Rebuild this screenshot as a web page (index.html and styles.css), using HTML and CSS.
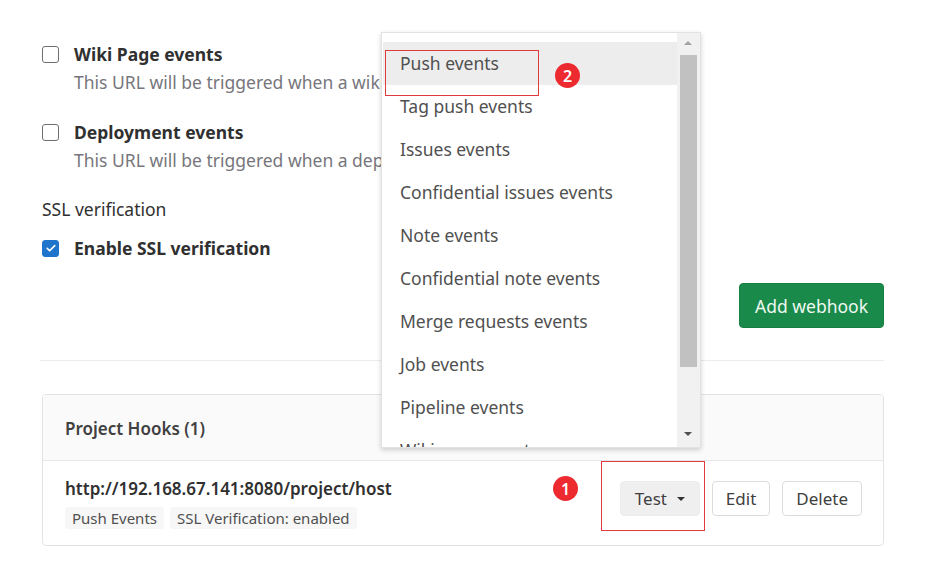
FILE: index.html
```html
<!DOCTYPE html>
<html>
<head>
<meta charset="utf-8">
<link rel="stylesheet" href="styles.css">
</head>
<body>
<div class="page">
  <div class="event">
    <div class="check-row">
      <span class="cb"></span>
      <span class="label">Wiki Page events</span>
    </div>
    <div class="desc">This URL will be triggered when a wiki page is created/updated</div>
  </div>
  <div class="event second">
    <div class="check-row">
      <span class="cb"></span>
      <span class="label">Deployment events</span>
    </div>
    <div class="desc">This URL will be triggered when a deployment starts, finishes, fails, or is canceled</div>
  </div>
  <div class="section-title">SSL verification</div>
  <div class="check-row ssl">
    <span class="cb checked">
      <svg viewBox="0 0 16 16" width="12" height="12"><path d="M3 8.5l3.2 3.2L13 4.8" fill="none" stroke="#fff" stroke-width="2.2" stroke-linecap="round" stroke-linejoin="round"/></svg>
    </span>
    <span class="label">Enable SSL verification</span>
  </div>
  <div class="actions">
    <button class="btn-green">Add webhook</button>
  </div>
  <div class="sep"></div>
  <div class="card">
    <div class="card-head">Project Hooks (1)</div>
    <div class="card-row">
      <div class="hook-info">
        <div class="hook-url">http://192.168.67.141:8080/project/host</div>
        <div class="badges">
          <span class="badge">Push Events</span>
          <span class="badge">SSL Verification: enabled</span>
        </div>
      </div>
      <div class="hook-btns">
        <button class="btn btn-test">Test <span class="caret"></span></button>
        <button class="btn">Edit</button>
        <button class="btn">Delete</button>
      </div>
    </div>
  </div>

  <div class="dropdown">
    <div class="dd-list">
      <div class="dd-item active">Push events</div>
      <div class="dd-item">Tag push events</div>
      <div class="dd-item">Issues events</div>
      <div class="dd-item">Confidential issues events</div>
      <div class="dd-item">Note events</div>
      <div class="dd-item">Confidential note events</div>
      <div class="dd-item">Merge requests events</div>
      <div class="dd-item">Job events</div>
      <div class="dd-item">Pipeline events</div>
      <div class="dd-item">Wiki page events</div>
    </div>
    <div class="dd-scroll">
      <span class="arrow-up"></span>
      <span class="thumb"></span>
      <span class="arrow-down"></span>
    </div>
  </div>

  <div class="mark mark-push"></div>
  <div class="mark mark-test"></div>
  <div class="num num-2">2</div>
  <div class="num num-1">1</div>
</div>
</body>
</html>
```
FILE: styles.css
```css
* { box-sizing: border-box; }
html, body { margin: 0; background: #fff; }
body {
  font-family: "Noto Sans", "Open Sans", sans-serif;
  font-size: 17.5px;
  color: #303030;
  width: 934px;
  height: 568px;
  overflow: hidden;
}
.page {
  position: relative;
  width: 934px;
  padding: 43px 50px 0 42px;
}
.check-row {
  display: flex;
  align-items: center;
  gap: 15px;
  height: 22px;
}
.cb {
  width: 17px;
  height: 17px;
  border: 1.5px solid #6e6e6e;
  border-radius: 3px;
  flex: none;
  display: flex;
  align-items: center;
  justify-content: center;
}
.cb.checked {
  background: #1f75cb;
  border-color: #1f75cb;
}
.label {
  font-weight: 700;
  font-size: 17.5px;
  line-height: 22px;
  color: #303030;
}
.desc {
  margin-top: 5px;
  padding-left: 32px;
  width: 620px;
  line-height: 24px;
  color: #77767c;
  white-space: nowrap;
  overflow: hidden;
}
.event.second { margin-top: 27px; }
.section-title {
  margin-top: 26px;
  line-height: 22px;
  color: #303030;
}
.check-row.ssl { margin-top: 17px; }
.actions {
  display: flex;
  justify-content: flex-end;
  margin-top: 24px;
}
.btn-green {
  font-family: inherit;
  font-size: 17.5px;
  height: 45px;
  width: 145px;
  background: #1a8a4b;
  color: #eef8f1;
  border: 1px solid #168043;
  border-radius: 4px;
  padding: 0;
}
.sep {
  margin-top: 32px;
  height: 1px;
  background: #ececec;
  margin-left: -2px;
}
.card {
  margin-top: 33px;
  border: 1px solid #e3e3e3;
  border-radius: 4px;
  overflow: hidden;
}
.card-head {
  height: 66px;
  background: #fafafa;
  border-bottom: 1px solid #e6e6e6;
  display: flex;
  align-items: center;
  padding-left: 22px;
  font-size: 17px;
  font-weight: 600;
  color: #404040;
  padding-top: 2px;
}
.card-row {
  display: flex;
  align-items: flex-start;
  justify-content: space-between;
  padding: 17px 21px 16px 22px;
}
.hook-url {
  font-weight: 600;
  font-size: 17px;
  line-height: 22px;
  color: #303030;
}
.badges {
  display: flex;
  gap: 6px;
  margin-top: 7px;
  margin-left: 0;
}
.badge {
  font-size: 15px;
  line-height: 22px;
  padding: 0 7px;
  background: #f7f7f8;
  color: #505050;
  border-radius: 3px;
}
.hook-btns {
  display: flex;
  gap: 12px;
  margin-top: 3px;
}
.btn {
  font-family: inherit;
  font-size: 17px;
  height: 35px;
  padding: 0 13px;
  background: #fff;
  border: 1px solid #dcdcdc;
  border-radius: 4px;
  color: #404040;
}
.btn-test {
  background: #efefef;
  border-color: #ececec;
  width: 80px;
  display: flex;
  align-items: center;
  justify-content: center;
  gap: 10px;
}
.caret {
  width: 0; height: 0;
  border-left: 4px solid transparent;
  border-right: 4px solid transparent;
  border-top: 4px solid #333;
}
.dropdown {
  position: absolute;
  left: 381px;
  top: 32px;
  width: 320px;
  height: 416px;
  background: #fff;
  border: 1px solid #e2e2e2;
  box-shadow: 0 2px 5px rgba(0,0,0,0.18);
  display: flex;
  overflow: hidden;
}
.dd-list {
  flex: 1;
  padding: 9px 0 0 1px;
}
.dd-item {
  height: 43px;
  line-height: 43px;
  padding-left: 17px;
  color: #505050;
  font-size: 17.5px;
  white-space: nowrap;
}
.dd-item.active { background: #ededed; }
.dd-scroll {
  width: 23px;
  background: #f1f1f1;
  position: relative;
}
.thumb {
  position: absolute;
  left: 3px;
  top: 22px;
  width: 17px;
  height: 312px;
  background: #c1c1c1;
}
.arrow-up, .arrow-down {
  position: absolute;
  left: 7px;
  width: 0; height: 0;
  border-left: 4px solid transparent;
  border-right: 4px solid transparent;
}
.arrow-up { top: 8px; border-bottom: 4px solid #a3a3a3; }
.arrow-down { top: 399px; border-top: 4px solid #505050; }
.mark {
  position: absolute;
  border: 1.5px solid #e0393e;
}
.mark-push { left: 385px; top: 50px; width: 154px; height: 46px; }
.mark-test { left: 601px; top: 461px; width: 104px; height: 70px; }
.num {
  position: absolute;
  width: 25px;
  height: 25px;
  border-radius: 50%;
  background: #ec2a2f;
  color: #fff;
  font-size: 16px;
  font-weight: 600;
  display: flex;
  align-items: center;
  justify-content: center;
  line-height: 1;
}
.num-2 { left: 555px; top: 63px; }
.num-1 { left: 553px; top: 476px; }
```
